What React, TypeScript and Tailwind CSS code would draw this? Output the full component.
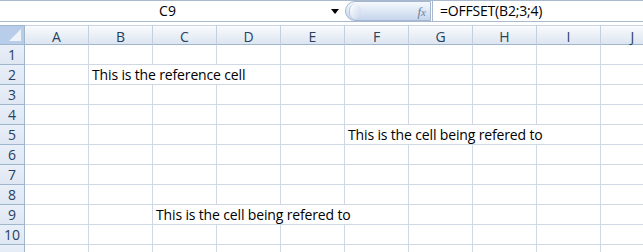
import React from "react";

const cols = ["A", "B", "C", "D", "E", "F", "G", "H", "I", "J"];

// cells with text: col index (0 = A), how many columns the text runs over
const texts: Record<number, { col: number; span: number; text: string }> = {
  2: { col: 1, span: 3, text: "This is the reference cell" },
  5: { col: 5, span: 4, text: "This is the cell being refered to" },
  9: { col: 2, span: 4, text: "This is the cell being refered to" },
};

function Row({ n, label }: { n: number; label: boolean }) {
  const t = texts[n];
  const cells: React.ReactNode[] = [];
  let i = 0;
  while (i < cols.length) {
    if (t && t.col === i) {
      cells.push(
        <div
          key={i}
          style={{ gridColumn: `span ${t.span} / span ${t.span}` }}
          className="h-[20px] border-r border-b border-[#d0d7e5] pl-[3px] pt-[1px] flex items-center whitespace-nowrap text-[14px] tracking-[-0.15px] text-black leading-none"
        >
          {t.text}
        </div>
      );
      i += t.span;
    } else {
      cells.push(<div key={i} className="h-[20px] border-r border-b border-[#d0d7e5]" />);
      i++;
    }
  }
  return (
    <>
      <div className="h-[20px] border-r border-b border-[#9eb6ce] bg-gradient-to-b from-[#e9eff8] to-[#dfe7f3] flex items-center justify-center pt-[1px] text-[14px] text-[#27415f] leading-none">
        {label ? n : ""}
      </div>
      {cells}
    </>
  );
}

export default function App() {
  return (
    <div className="w-[643px] h-[252px] overflow-hidden bg-white font-['Open_Sans','Liberation_Sans',sans-serif]">
      {/* formula bar */}
      <div className="h-[22px] flex border-t border-b border-[#a9b8cc] bg-white">
        <div className="w-[345px] flex items-center">
          <div className="flex-1 text-center text-[14px] text-black leading-none pl-[4px]">C9</div>
          <svg width="8" height="5" viewBox="0 0 8 5" className="mr-[6px]">
            <path d="M0 0 L8 0 L4 5 Z" fill="#000" />
          </svg>
        </div>
        <div className="w-[86px] rounded-l-full rounded-r-[3px] border border-[#a3b6d2] bg-gradient-to-b from-[#f6f9fd] via-[#dde7f5] to-[#c6d5ec] flex items-center relative">
          <div className="ml-[3px] w-[12px] h-[15px] rounded-full bg-gradient-to-br from-white to-[#c9d6ea] border-l border-[#b8c7dd]" />
          <span className="ml-auto mr-[4px] font-['Liberation_Serif',serif] italic text-[13px] text-[#6d7f9b] leading-none">
            f<span className="text-[11px]">x</span>
          </span>
        </div>
        <div className="flex-1 border-l border-[#a9b8cc] ml-[1px] flex items-center pl-[7px] text-[14px] tracking-[-0.2px] text-black leading-none">
          =OFFSET(B2;3;4)
        </div>
      </div>
      <div className="h-[3px]" />
      {/* grid */}
      <div className="grid grid-cols-[25px_repeat(10,64px)] w-[665px]">
        <div className="h-[20px] border-t border-r border-b border-[#9eb6ce] bg-[#b7cdea] relative overflow-hidden">
          <svg width="14" height="14" viewBox="0 0 14 14" className="absolute right-[2px] bottom-[2px]">
            <path d="M13 1 L13 13 L1 13 Z" fill="#eef3fa" />
          </svg>
        </div>
        {cols.map((c) => (
          <div
            key={c}
            className="h-[20px] border-t border-r border-b border-t-[#c8d4e4] border-r-[#c3cfe0] border-b-[#9eb6ce] bg-gradient-to-b from-[#f9fbfd] to-[#dde5f0] flex items-center justify-center pt-[3px] text-[14px] text-[#27415f] leading-none"
          >
            {c}
          </div>
        ))}
        {[1, 2, 3, 4, 5, 6, 7, 8, 9, 10, 11].map((n) => (
          <Row key={n} n={n} label={n <= 10} />
        ))}
      </div>
    </div>
  );
}
